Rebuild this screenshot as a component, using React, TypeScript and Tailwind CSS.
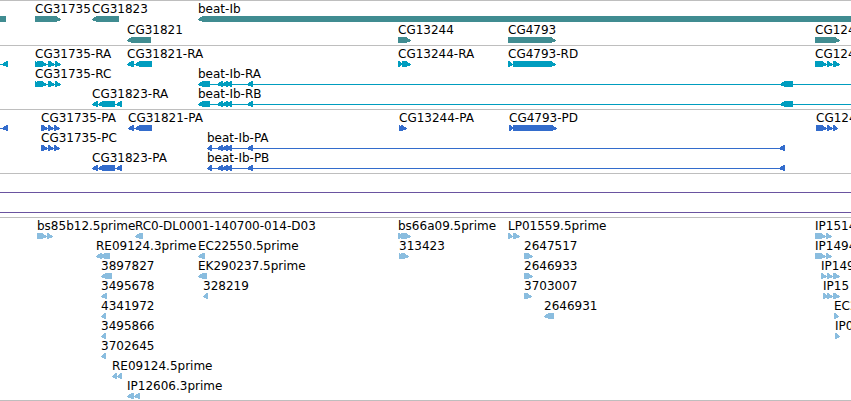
interface Feature {
  label?: string;
  start: number;
  strand: "+" | "-";
  // Exons as [start, end], in the same units as start
  exons: [number, number][];
}

interface Track {
  name: string;
  color: string;
  rows: Feature[][];
}

// Far enough to run past the right edge of any window
const OFFSCREEN = 4000;

const fwd = (
  label: string | undefined,
  ...exons: [number, number][]
): Feature => ({ label, start: exons[0][0], strand: "+", exons });

const rev = (
  label: string | undefined,
  ...exons: [number, number][]
): Feature => ({ label, start: exons[0][0], strand: "-", exons });

const beatTranscript = (label: string) =>
  rev(
    label,
    [198, 210],
    [217, 223],
    [222, 228],
    [226, 232],
    [247, 253],
    [780, 793],
    [OFFSCREEN - 10, OFFSCREEN],
  );

const beatProtein = (label: string) =>
  rev(
    label,
    [207, 212],
    [217, 223],
    [222, 228],
    [226, 232],
    [247, 253],
    [779, 785],
  );

const tracks: Track[] = [
  {
    name: "Genes",
    color: "text-[#408c91]",
    rows: [
      [
        rev(undefined, [-20, 6]),
        fwd("CG31735", [35, 61]),
        rev("CG31823", [92, 119]),
        rev("beat-Ib", [198, OFFSCREEN]),
      ],
      [
        rev("CG31821", [127, 151]),
        fwd("CG13244", [398, 411]),
        fwd("CG4793", [508, 556]),
        fwd("CG124", [815, 840]),
      ],
    ],
  },
  {
    name: "Transcripts",
    color: "text-[#009dbf]",
    rows: [
      [
        rev(undefined, [-20, -10], [2, 8]),
        fwd("CG31735-RA", [35, 38], [37, 47], [48, 55], [55, 61]),
        rev("CG31821-RA", [127, 134], [135, 152]),
        fwd("CG13244-RA", [398, 402], [402, 411]),
        fwd("CG4793-RD", [508, 513], [513, 556]),
        fwd("CG124", [815, 827], [827, 833], [833, 840]),
      ],
      [
        fwd("CG31735-RC", [35, 38], [37, 47], [48, 55], [55, 61]),
        beatTranscript("beat-Ib-RA"),
      ],
      [
        rev("CG31823-RA", [92, 98], [98, 115], [116, 122]),
        beatTranscript("beat-Ib-RB"),
      ],
    ],
  },
  {
    name: "Proteins",
    color: "text-[#336ccc]",
    rows: [
      [
        rev(undefined, [-20, -10], [2, 8]),
        fwd("CG31735-PA", [41, 48], [48, 54], [54, 60]),
        rev("CG31821-PA", [128, 134], [135, 152]),
        fwd("CG13244-PA", [399, 402], [401, 407]),
        fwd("CG4793-PD", [509, 513], [513, 557]),
        fwd("CG124", [816, 827], [827, 833], [833, 838]),
      ],
      [
        fwd("CG31735-PC", [41, 48], [48, 54], [54, 60]),
        beatProtein("beat-Ib-PA"),
      ],
      [
        rev("CG31823-PA", [92, 98], [98, 115], [116, 122]),
        beatProtein("beat-Ib-PB"),
      ],
    ],
  },
  {
    name: "Spanning alignments",
    color: "text-[#6a53a0]",
    rows: [
      [fwd(undefined, [-20, -10], [OFFSCREEN - 10, OFFSCREEN])],
      [fwd(undefined, [-20, -10], [OFFSCREEN - 10, OFFSCREEN])],
    ],
  },
  {
    name: "ESTs",
    color: "text-[#8abddf]",
    rows: [
      [
        fwd("bs85b12.5prime", [37, 47], [47, 53]),
        rev("RC0-DL0001-140700-014-D03", [135, 143]),
        fwd("bs66a09.5prime", [398, 402], [401, 411]),
        fwd("LP01559.5prime", [508, 513], [513, 520]),
        fwd("IP1514", [815, 826], [826, 832]),
      ],
      [
        rev("RE09124.3prime", [96, 102], [100, 110]),
        rev("EC22550.5prime", [198, 205]),
        fwd("313423", [399, 402], [401, 409]),
        fwd("2647517", [524, 533]),
        fwd("IP1494", [815, 826], [826, 832]),
      ],
      [
        rev("3897827", [101, 112]),
        rev("EK290237.5prime", [198, 207]),
        fwd("2646933", [524, 533]),
        fwd("IP149", [821, 827], [827, 833], [833, 840]),
      ],
      [
        rev("3495678", [101, 107]),
        rev("328219", [203, 208]),
        fwd("3703007", [524, 532]),
        fwd("IP15", [823, 828], [827, 833], [833, 840]),
      ],
      [
        rev("4341972", [101, 106]),
        rev("2646931", [544, 554]),
        fwd("EC2", [834, 839]),
      ],
      [rev("3495866", [101, 106]), fwd("IP0", [835, 840])],
      [rev("3702645", [101, 106])],
      [rev("RE09124.5prime", [112, 117], [117, 122])],
      [rev("IP12606.3prime", [127, 134], [134, 140])],
    ],
  },
];

// Block arrow, 6px high, with a head of up to 5px and a 1px blunt tip
// that lines up with the intron line
const arrowPoints = (from: number, to: number, strand: "+" | "-") => {
  const head = Math.min(5, to - from - 1);

  return strand === "+"
    ? `${from},0 ${to - head},0 ${to},3 ${to},4 ${to - head},6 ${from},6`
    : `${to},0 ${from + head},0 ${from},3 ${from},4 ${from + head},6 ${to},6`;
};

const FeatureGlyph = ({ feature }: { feature: Feature }) => {
  const { start, exons, strand } = feature;
  const width = exons[exons.length - 1][1] - start;

  return (
    <svg
      aria-hidden="true"
      className="block h-1.5 fill-current"
      shapeRendering="crispEdges"
      width={width}
    >
      {exons.length > 1 && <rect height="1" width={width} x="0" y="3" />}
      {exons.map(([from, to]) => (
        <polygon
          key={from}
          points={arrowPoints(from - start, to - start, strand)}
        />
      ))}
    </svg>
  );
};

const TrackSection = ({ track }: { track: Track }) => {
  return (
    <section
      aria-label={track.name}
      className={`flex flex-col border-t border-[#bebebe] pt-px pb-0.5 last:border-b last:pb-px ${
        track.name === "Genes" ? "gap-px" : ""
      } ${track.color}`}
    >
      {track.rows.map((row, i) => (
        <div key={i} className="relative h-5">
          {row.map((feature) => (
            <div
              key={feature.start}
              className="absolute inset-y-0 flex flex-col"
              style={{ left: feature.start }}
            >
              <span className="h-3.5 leading-3.5 whitespace-nowrap text-black">
                {feature.label}
              </span>
              <FeatureGlyph feature={feature} />
            </div>
          ))}
        </div>
      ))}
    </section>
  );
};

export default function App() {
  return (
    <main className="w-full overflow-hidden bg-white font-['DejaVu_Sans',sans-serif] text-xs">
      {tracks.map((track) => (
        <TrackSection key={track.name} track={track} />
      ))}
    </main>
  );
}
